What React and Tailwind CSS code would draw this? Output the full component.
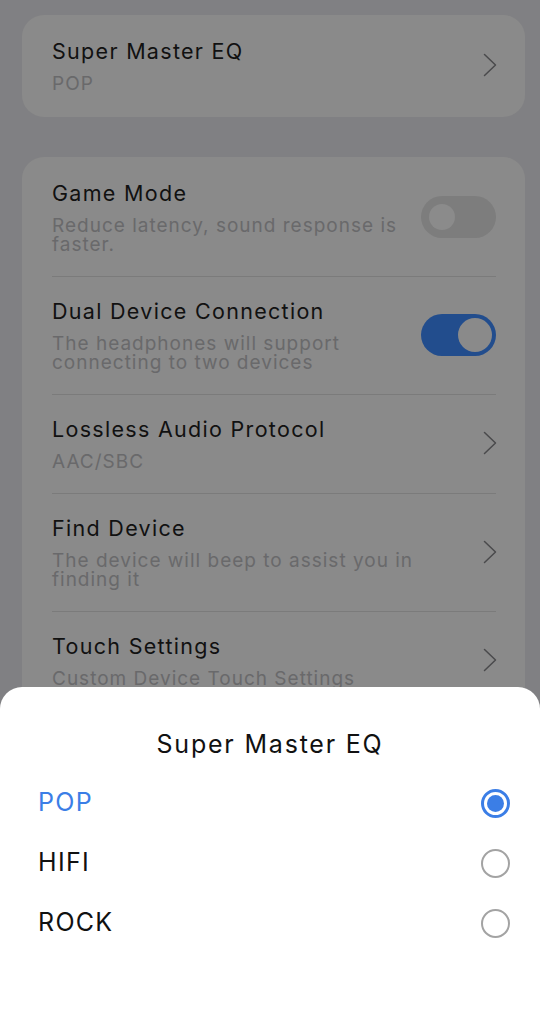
import { useState } from "react";

const font = { fontFamily: "Inter, 'Noto Sans', sans-serif" };

function Chevron() {
  return (
    <svg width="14" height="24" viewBox="0 0 14 24" fill="none" className="shrink-0 -mr-[1px]">
      <path d="M1.5 1.5 L12.5 12 L1.5 22.5" stroke="#4a4a4c" strokeWidth="1.5" strokeLinecap="round" strokeLinejoin="round" />
    </svg>
  );
}

function Toggle({ on }) {
  if (on) {
    return (
      <div className="shrink-0 w-[75px] h-[42px] rounded-full bg-[#224d8d] flex items-center justify-end pr-[4px]">
        <div className="w-[34px] h-[34px] rounded-full bg-[#8a8a8a]" />
      </div>
    );
  }
  return (
    <div className="shrink-0 w-[75px] h-[42px] rounded-full bg-[#7d7d7d] flex items-center pl-[8px]">
      <div className="w-[26px] h-[26px] rounded-full bg-[#8b8b8b]" />
    </div>
  );
}

function Row({ title, sub, right, divider = true, top = "pt-[20px] pb-[22px]" }) {
  return (
    <div className={`flex items-center ${top} ${divider ? "border-b border-[#7b7b7b]" : ""}`}>
      <div className="flex-1 min-w-0 pr-[20px]">
        <div className="text-[21.5px] leading-[28px] text-[#111] tracking-[1.3px]">{title}</div>
        <div className="mt-[9px] text-[19px] leading-[19px] text-[#69696b] tracking-[1px]">{sub}</div>
      </div>
      {right}
    </div>
  );
}

function Radio({ checked }) {
  if (checked) {
    return (
      <div className="w-[29px] h-[29px] rounded-full border-[3px] border-[#3b7ee6] flex items-center justify-center">
        <div className="w-[17px] h-[17px] rounded-full bg-[#3b7ee6]" />
      </div>
    );
  }
  return <div className="w-[29px] h-[29px] rounded-full border-[2.5px] border-[#a3a3a3]" />;
}

export default function App() {
  const [selected, setSelected] = useState("POP");
  const options = ["POP", "HIFI", "ROCK"];

  return (
    <div className="relative w-[540px] h-[1021px] overflow-hidden bg-[#808083]" style={font}>
      <div className="pl-[22px] pr-[15px] pt-[15px]">
        <div className="rounded-[22px] bg-[#8a8a8a] pl-[30px] pr-[29px]">
          <Row title="Super Master EQ" sub="POP" right={<Chevron />} divider={false} top="pt-[22px] pb-[24px]" />
        </div>

        <div className="mt-[40px] rounded-[22px] bg-[#8a8a8a] pl-[30px] pr-[29px] pt-[2px]">
          <Row title="Game Mode" sub="Reduce latency, sound response is faster." right={<Toggle on={false} />} />
          <Row title="Dual Device Connection" sub="The headphones will support connecting to two devices" right={<Toggle on />} />
          <Row title="Lossless Audio Protocol" sub="AAC/SBC" right={<Chevron />} />
          <Row title="Find Device" sub="The device will beep to assist you in finding it" right={<Chevron />} />
          <Row title="Touch Settings" sub="Custom Device Touch Settings" right={<Chevron />} divider={false} />
        </div>
      </div>

      {/* bottom sheet */}
      <div className="absolute left-0 right-0 bottom-0 h-[334px] bg-white rounded-t-[22px] pt-[42px]">
        <div className="text-center text-[25px] leading-[30px] text-[#111] tracking-[1.8px]">Super Master EQ</div>
        <div className="mt-[14px]">
          {options.map((opt) => (
            <div
              key={opt}
              onClick={() => setSelected(opt)}
              className="h-[60px] flex items-center justify-between pl-[38px] pr-[30px] cursor-pointer"
            >
              <span className={`text-[25px] tracking-[1.3px] ${selected === opt ? "text-[#3b7ee6]" : "text-[#111]"}`}>
                {opt}
              </span>
              <Radio checked={selected === opt} />
            </div>
          ))}
        </div>
      </div>
    </div>
  );
}
